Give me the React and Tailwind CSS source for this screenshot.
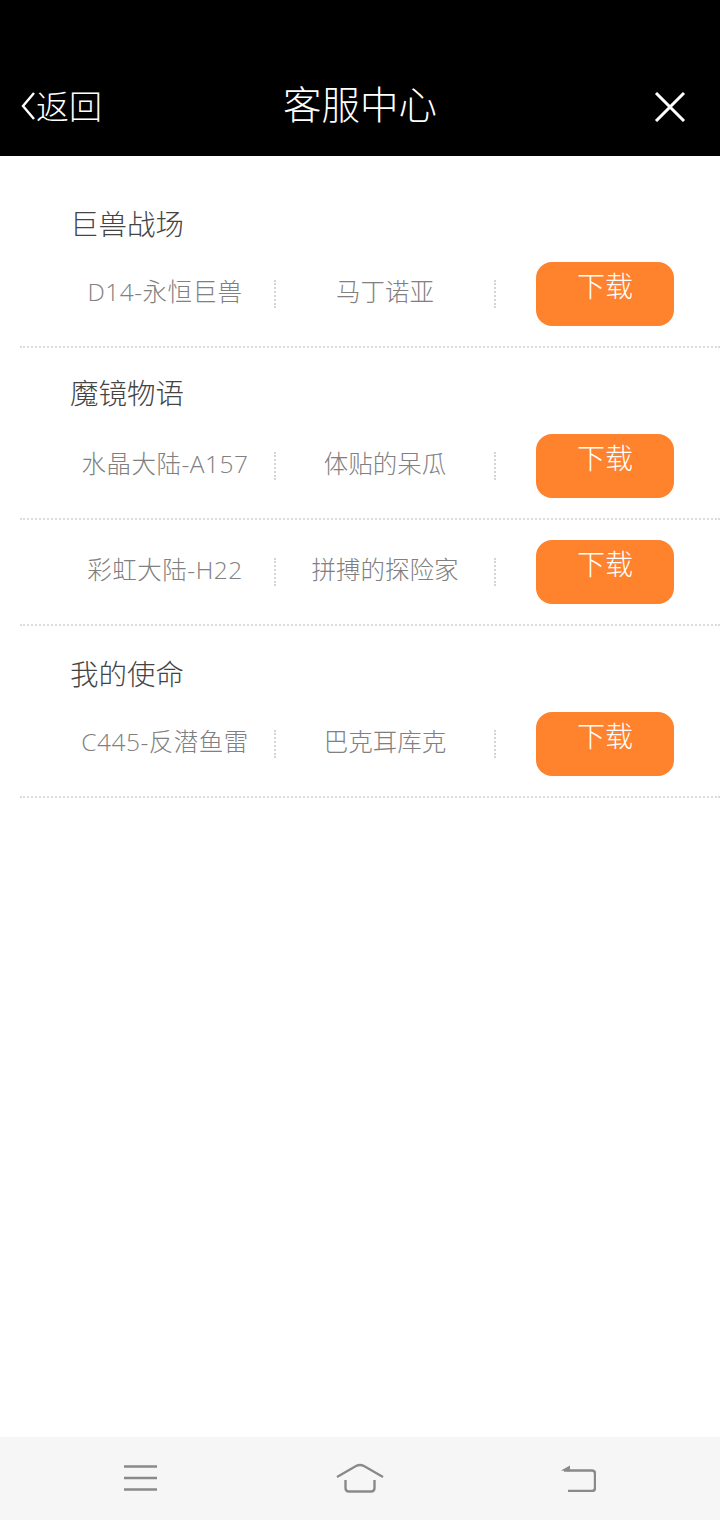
const sections = [
  { title: '巨兽战场', head: 'h-[86px] pt-[50px] pl-[50px]', rows: [['D14-永恒巨兽', '马丁诺亚']] },
  { title: '魔镜物语', head: 'h-[66px] pt-[27px] pl-[50px]', rows: [['水晶大陆-A157', '体贴的呆瓜'], ['彩虹大陆-H22', '拼搏的探险家']] },
  { title: '我的使命', head: 'h-[66px] pt-[30px] pl-[50px]', rows: [['C445-反潜鱼雷', '巴克耳库克']] },
];

const Row = ({ server, role }) => (
  <div className="flex h-[106px] items-center pl-[36px] border-b-2 border-dotted border-[#dcdcdc]">
    <div className="w-[220px] h-[28px] pb-[4px] flex items-center justify-center border-r-2 border-dotted border-[#d4d4d4] text-[24.5px] tracking-[0.5px] text-[#808080] whitespace-nowrap">
      {server}
    </div>
    <div className="w-[220px] h-[28px] pb-[4px] flex items-center justify-center border-r-2 border-dotted border-[#d4d4d4] text-[24.5px] text-[#808080] whitespace-nowrap">
      {role}
    </div>
    <div className="w-[218px] flex justify-center">
      <button className="w-[138px] h-[64px] pb-[15px] rounded-2xl bg-[#ff822d] text-[28px] leading-[49px] text-white">
        下载
      </button>
    </div>
  </div>
);

export default function App() {
  return (
    <div className="h-[1520px] flex flex-col bg-white font-['Open_Sans','Noto_Sans_CJK_SC',sans-serif] font-light">
      {/* Header */}
      <div className="h-[156px] shrink-0 bg-black pt-[58px] px-[20px] flex items-center justify-between text-white relative">
        <div className="flex items-center -mt-[2px]">
          <svg width="16" height="30" viewBox="0 0 16 30" fill="none" stroke="#fff" strokeWidth="2.4">
            <path d="M14 2 L3 15 L14 28" />
          </svg>
          <span className="text-[33px] leading-none">返回</span>
        </div>
        <span className="absolute left-0 right-0 top-[85px] text-center text-[38.5px] leading-none pointer-events-none">客服中心</span>
        <svg width="32" height="30" viewBox="0 0 32 30" fill="none" stroke="#fff" strokeWidth="3" className="mr-[14px]">
          <path d="M2 1 L30 29 M30 1 L2 29" />
        </svg>
      </div>

      {/* List */}
      <div className="flex-1 pl-[20px]">
        {sections.map((section) => (
          <div key={section.title}>
            <div className={`${section.head} text-[28.5px] leading-[36px] text-[#444444]`}>
              {section.title}
            </div>
            {section.rows.map((row) => (
              <Row key={row[0]} server={row[0]} role={row[1]} />
            ))}
          </div>
        ))}
      </div>

      {/* Bottom nav */}
      <div className="h-[83px] shrink-0 bg-[#f6f6f6] pb-[2px] flex items-center justify-between pl-[124px] pr-[124px]">
        <svg width="33" height="26" viewBox="0 0 33 26" fill="none" stroke="#8a8a8a" strokeWidth="2.4">
          <path d="M0 1.5 H33 M0 13 H33 M0 24.5 H33" />
        </svg>
        <svg width="48" height="30" viewBox="0 0 48 30" fill="none" stroke="#8a8a8a" strokeWidth="2.4" className="ml-[2px]">
          <path d="M1 14 L20 3 Q24 1 28 3 L47 14" />
          <path d="M9.5 17 V25 Q9.5 28.5 13 28.5 H35 Q38.5 28.5 38.5 25 V17" />
        </svg>
        <svg width="35" height="28" viewBox="0 0 35 28" fill="none" stroke="#8a8a8a" strokeWidth="2.4">
          <path d="M3 6.5 H31 Q34 6.5 34 9.5 V24 Q34 27 31 27 H7" />
          <path d="M0 6.5 L9 1.5 V7.5 Z" fill="#8a8a8a" stroke="none" />
        </svg>
      </div>
    </div>
  );
}
